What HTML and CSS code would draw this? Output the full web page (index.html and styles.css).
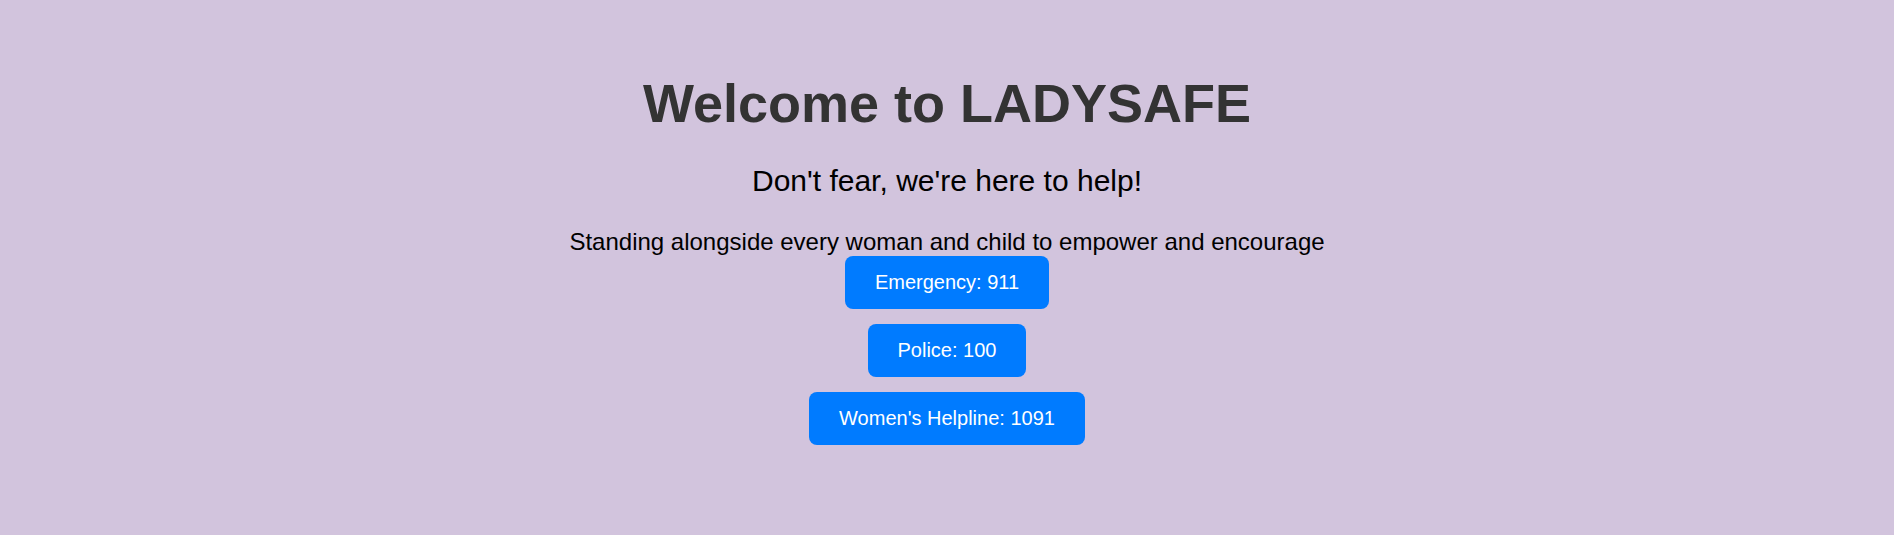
FILE: index.html
```html
<!DOCTYPE html>
<html lang="en">
<head>
<meta charset="utf-8">
<title>LADYSAFE</title>
<link rel="stylesheet" href="styles.css">
</head>
<body>
<section class="hero">
  <h1 class="hero-title">Welcome to LADYSAFE</h1>
  <h2 class="hero-subtitle">Don't fear, we're here to help!</h2>
  <p class="hero-tagline">Standing alongside every woman and child to empower and encourage</p>
  <div class="hero-buttons">
    <a class="call-btn" href="#">Emergency: 911</a>
    <a class="call-btn" href="#">Police: 100</a>
    <a class="call-btn" href="#">Women's Helpline: 1091</a>
  </div>
</section>
</body>
</html>
```

FILE: styles.css
```css
html, body {
  margin: 0;
  padding: 0;
  background: #ffffff;
  font-family: "Liberation Sans", Arial, sans-serif;
}

.hero {
  background: #d2c4dd;
  height: 535px;
  box-sizing: border-box;
  padding-top: 72px;
  display: flex;
  flex-direction: column;
  align-items: center;
  text-align: center;
}

.hero-title {
  margin: 0;
  font-size: 54px;
  line-height: 62px;
  font-weight: 700;
  color: #333333;
}

.hero-subtitle {
  margin: 29px 0 0;
  font-size: 30px;
  line-height: 35px;
  font-weight: 400;
  color: #000000;
}

.hero-tagline {
  margin: 30px 0 0;
  font-size: 24px;
  line-height: 27px;
  color: #000000;
}

.hero-buttons {
  margin-top: 1px;
  display: flex;
  flex-direction: column;
  align-items: center;
  gap: 15px;
}

.call-btn {
  display: block;
  background: #007bff;
  color: #ffffff;
  text-decoration: none;
  font-size: 20px;
  line-height: 23px;
  padding: 15px 30px;
  border-radius: 8px;
}
```
